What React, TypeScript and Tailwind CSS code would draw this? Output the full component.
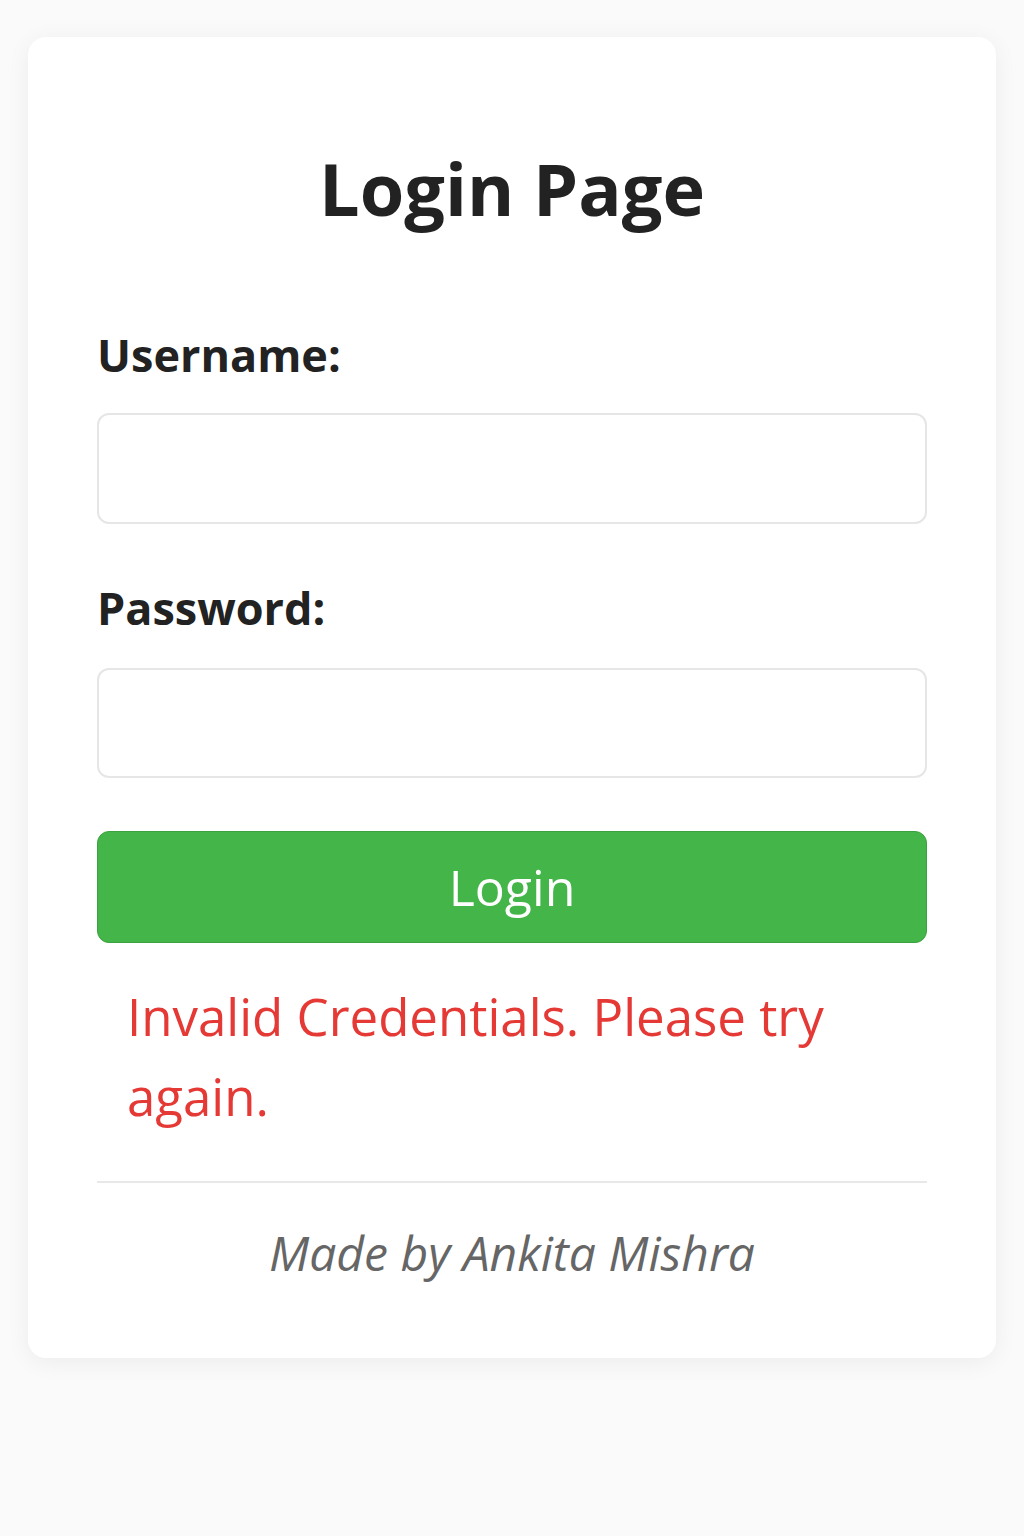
import React, { useState } from 'react';

const FONT = { fontFamily: '"Open Sans", "Noto Sans", sans-serif' };

export default function App() {
  const [username, setUsername] = useState('');
  const [password, setPassword] = useState('');
  const [error] = useState('Invalid Credentials. Please try again.');

  return (
    <div className="min-h-[1536px] bg-[#fafafa] pt-[37px] px-[28px]" style={FONT}>
      <div className="bg-white rounded-[18px] shadow-[0_4px_24px_rgba(0,0,0,0.06)] px-[69px] pt-[107px] pb-[75px]">
        <h1 className="text-center text-[72px] leading-[88px] font-bold text-[#222222]">Login Page</h1>

        <form onSubmit={(e) => e.preventDefault()} className="mt-[95px]">
          <label className="block text-[45px] leading-[56px] font-bold text-[#222222] mb-[30px]">Username:</label>
          <input
            type="text"
            value={username}
            onChange={(e) => setUsername(e.target.value)}
            className="block w-full h-[111px] border-2 border-[#e6e6e6] rounded-[12px] px-6 text-[40px] outline-none"
          />

          <label className="block mt-[56px] text-[45px] leading-[56px] font-bold text-[#222222] mb-[32px]">Password:</label>
          <input
            type="password"
            value={password}
            onChange={(e) => setPassword(e.target.value)}
            className="block w-full h-[110px] border-2 border-[#e6e6e6] rounded-[12px] px-6 text-[40px] outline-none"
          />

          <button
            type="submit"
            className="block w-full mt-[53px] h-[112px] bg-[#44b549] border border-[#3aa33f] rounded-[12px] text-white text-[50px] leading-none"
          >
            Login
          </button>
        </form>

        {error && (
          <p className="mt-[33px] px-[30px] text-[51px] leading-[80px] text-[#e53935]">{error}</p>
        )}

        <div className="mt-[45px] border-t-2 border-[#e8e8e8]" />

        <p className="mt-[40px] text-center italic text-[48px] leading-[60px] text-[#666666]">Made by Ankita Mishra</p>
      </div>
    </div>
  );
}
